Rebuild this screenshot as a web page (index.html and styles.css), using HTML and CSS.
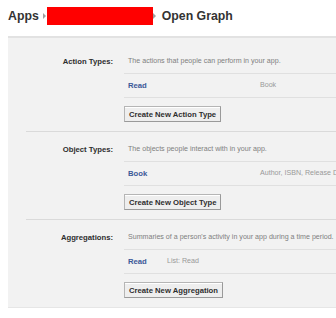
FILE: index.html
```html
<!DOCTYPE html>
<html>
<head>
<meta charset="utf-8">
<link rel="stylesheet" href="styles.css">
</head>
<body>
<div class="page">
  <div class="crumbs">
    <span class="crumb">Apps</span>
    <span class="arrow first"></span>
    <span class="redact"></span>
    <span class="arrow"></span>
    <span class="crumb current">Open Graph</span>
  </div>
  <div class="panel">
    <section class="sec">
      <div class="label">Action Types:</div>
      <div class="content">
        <div class="row desc">The actions that people can perform in your app.</div>
        <div class="row item"><span class="name wide">Read</span><span class="meta">Book</span></div>
        <button class="btn">Create New Action Type</button>
      </div>
    </section>
    <section class="sec">
      <div class="label">Object Types:</div>
      <div class="content">
        <div class="row desc">The objects people interact with in your app.</div>
        <div class="row item"><span class="name wide">Book</span><span class="meta">Author, ISBN, Release Date</span></div>
        <button class="btn">Create New Object Type</button>
      </div>
    </section>
    <section class="sec">
      <div class="label">Aggregations:</div>
      <div class="content">
        <div class="row desc">Summaries of a person's activity in your app during a time period.</div>
        <div class="row item"><span class="name narrow">Read</span><span class="meta">List: Read</span></div>
        <button class="btn">Create New Aggregation</button>
      </div>
    </section>
  </div>
</div>
</body>
</html>
```
FILE: styles.css
```css
html, body {
  margin: 0;
  padding: 0;
  overflow: hidden;
  background: #fff;
}
body {
  font-family: "Liberation Sans", Arial, sans-serif;
  width: 336px;
  height: 318px;
}
.page {
  padding-left: 8px;
  width: 460px;
}
.crumbs {
  display: flex;
  align-items: center;
  height: 32px;
  margin-bottom: 4px;
  font-weight: bold;
  font-size: 12.3px;
  color: #333;
}
.arrow {
  width: 0;
  height: 0;
  border-left: 3px solid #a0a0a0;
  border-top: 3px solid transparent;
  border-bottom: 3px solid transparent;
}
.arrow.first {
  margin-left: 4px;
  margin-right: 1px;
}
.redact {
  width: 106px;
  height: 18px;
  background: #ff0000;
}
.current {
  margin-left: 6px;
}
.panel {
  background: #f2f2f2;
  border-top: 2px solid #e2e2e2;
  border-bottom: 1px solid #e6e6e6;
  padding-top: 6px;
}
.sec {
  display: flex;
  margin-left: 18px;
  padding: 6px 0 9px;
  border-bottom: 1px solid #dadada;
}
.sec:last-child {
  border-bottom: 0;
}
.label {
  width: 87px;
  margin-right: 11px;
  text-align: right;
  font-weight: bold;
  font-size: 7.7px;
  line-height: 23px;
  color: #2e2e2e;
  white-space: nowrap;
}
.content {
  flex: 1;
}
.row {
  display: flex;
  height: 23px;
  line-height: 23px;
  border-bottom: 1px solid #e0e0e0;
  padding-left: 4px;
  font-size: 7.1px;
  color: #808080;
  white-space: nowrap;
}
.meta {
  color: #999;
}
.name {
  font-weight: bold;
  font-size: 7.7px;
  color: #3b5998;
}
.name.wide {
  width: 132px;
}
.name.narrow {
  width: 39px;
}
.btn {
  display: block;
  margin-top: 8px;
  height: 16px;
  padding: 0 4px;
  font-family: "Liberation Sans", Arial, sans-serif;
  font-weight: bold;
  font-size: 7.7px;
  color: #2e2e2e;
  background: #eeeeee;
  border: 1px solid #9a9a9a;
  border-top-color: #b5b5b5;
  border-left-color: #b5b5b5;
  box-shadow: inset 0 1px 0 #fff;
  border-radius: 0;
}
```
